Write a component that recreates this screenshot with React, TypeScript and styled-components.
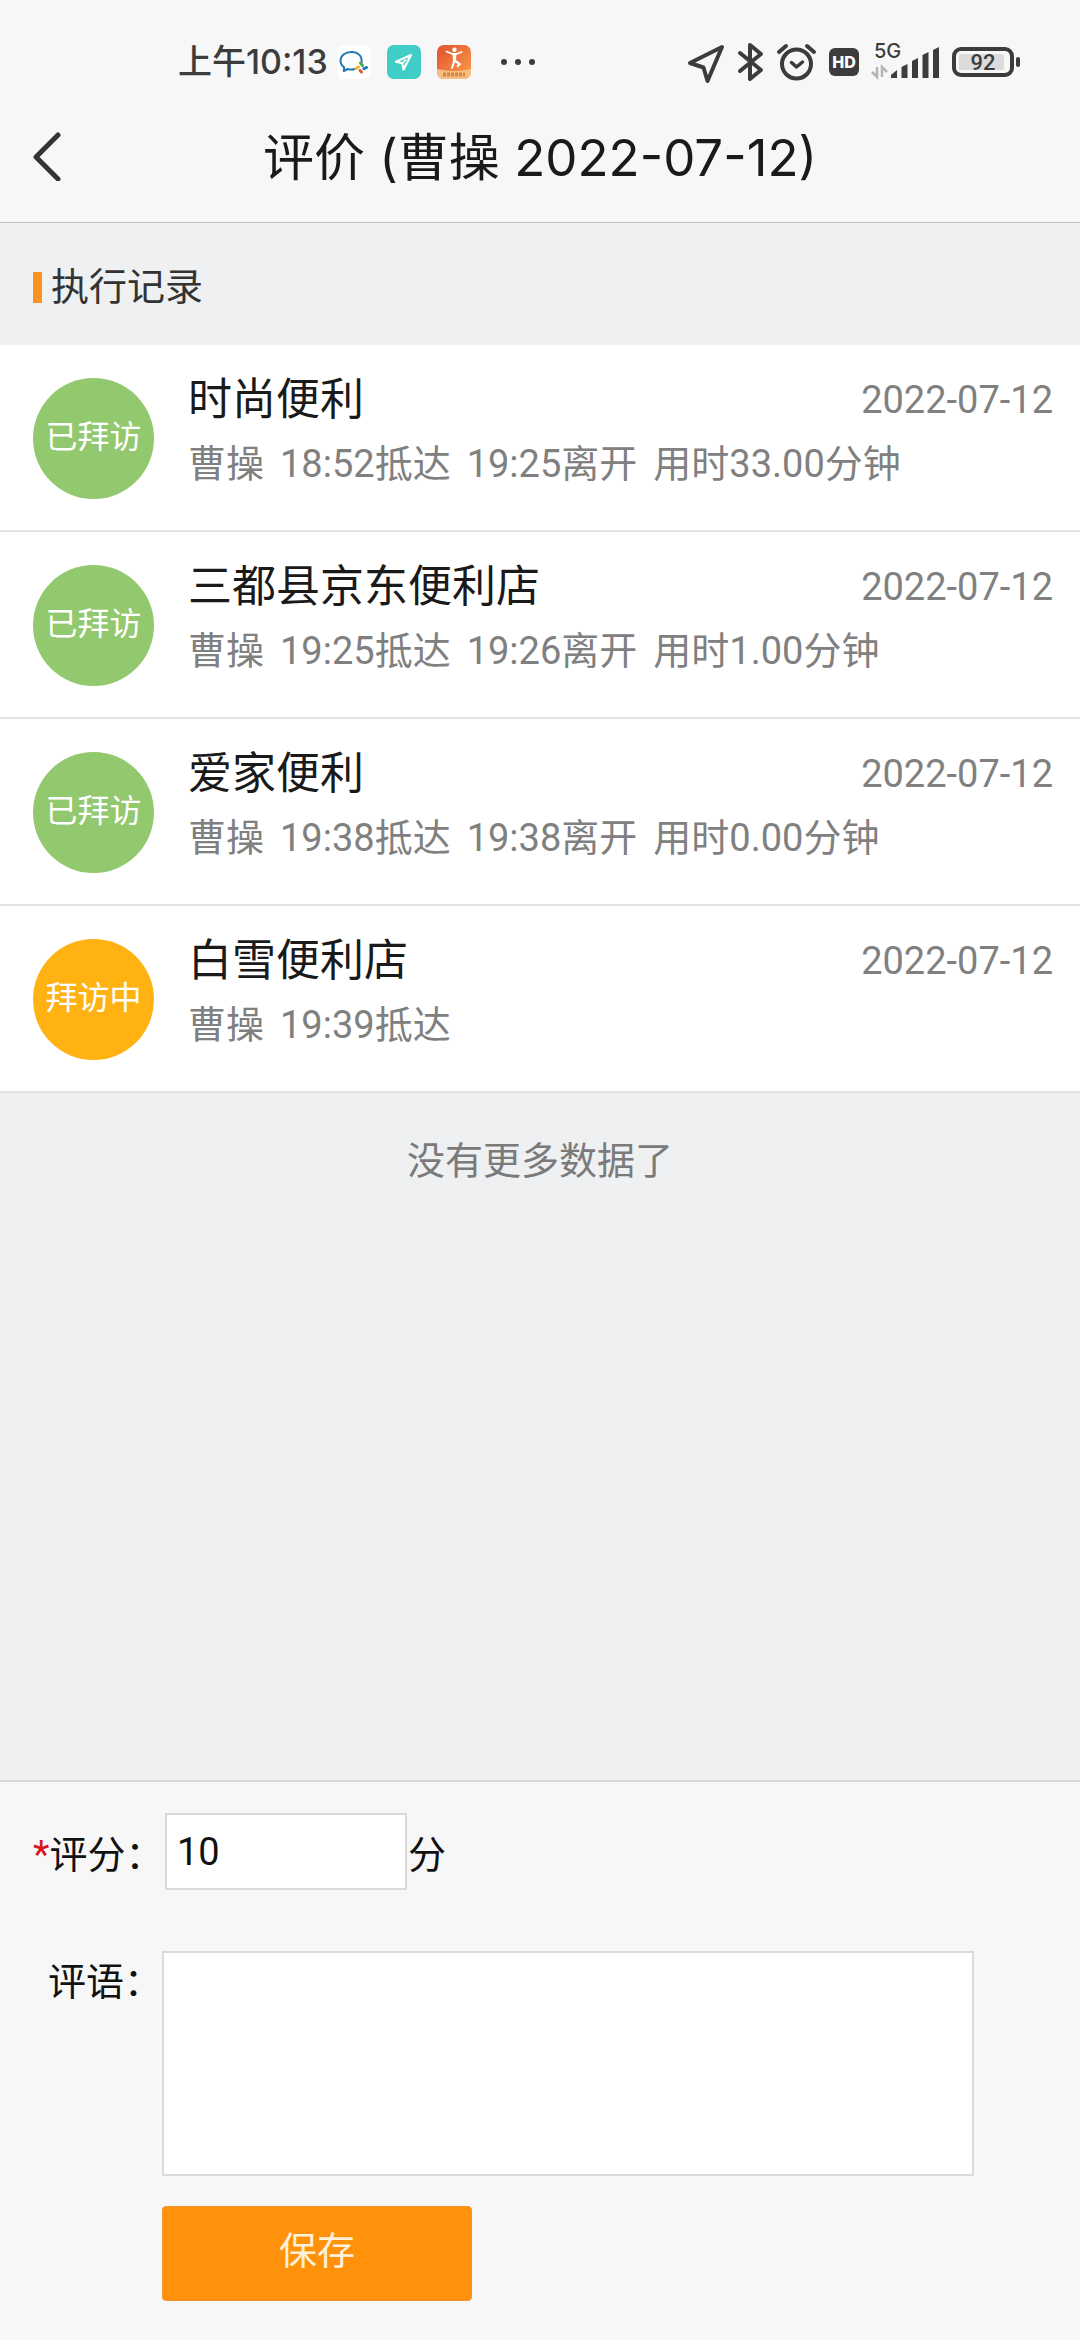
import React, { useState } from "react";
import styled, { createGlobalStyle } from "styled-components";

const sans = `Roboto, "Noto Sans CJK SC", sans-serif`;
const display = `Inter, "Noto Sans CJK SC", sans-serif`;

const GlobalStyle = createGlobalStyle`
  *, *::before, *::after { box-sizing: border-box; }
  body {
    margin: 0;
    background: #eff0f2;
    font-family: ${sans};
  }
`;

const Page = styled.div`
  display: flex;
  flex-direction: column;
  min-height: 100vh;
`;

const TopArea = styled.header`
  background: #f7f7f7;
  border-bottom: 1px solid #bfbfc2;
`;

const StatusBar = styled.div`
  display: flex;
  align-items: center;
  justify-content: space-between;
  height: 90px;
  padding: 34px 60px 0 178px;
  color: #3c3c3c;

  svg {
    display: block;
    overflow: visible;
  }
`;

const StatusGroup = styled.div<{ $gap: number }>`
  display: flex;
  align-items: center;
  gap: ${(p) => p.$gap}px;
`;

const Clock = styled.time`
  width: 143px;
  font: 500 34px/40px ${display};
  white-space: nowrap;
`;

const NavBar = styled.div`
  display: grid;
  grid-template-columns: 96px 1fr 96px;
  align-items: center;
  height: 132px;
`;

const BackButton = styled.button`
  display: flex;
  align-items: center;
  height: 96px;
  padding: 0 0 0 32px;
  border: 0;
  background: none;
  color: #333;
`;

const Title = styled.h1`
  margin: 0;
  padding-top: 4px;
  font: 400 51px/64px ${display};
  color: #1a1a1a;
  text-align: center;
  white-space: nowrap;
`;

const Main = styled.main`
  flex: 1;
`;

const SectionTitle = styled.h2`
  display: flex;
  align-items: center;
  gap: 9px;
  height: 122px;
  margin: 0;
  padding: 6px 33px 0;
  font: 400 38px/56px ${sans};
  color: #333;

  &::before {
    content: "";
    width: 9px;
    height: 31px;
    background: #f7941d;
  }
`;

const RecordList = styled.ul`
  margin: 0;
  padding: 0;
  list-style: none;
`;

const Record = styled.li`
  display: flex;
  align-items: flex-start;
  gap: 34px;
  height: 187px;
  padding: 23px 27px 0 33px;
  border-bottom: 2px solid #e3e3e3;
  background: #fff;
`;

const StatusBadge = styled.span<{ $active?: boolean }>`
  display: flex;
  flex: none;
  align-items: center;
  justify-content: center;
  width: 121px;
  height: 121px;
  margin-top: 10px;
  padding-bottom: 4px;
  border-radius: 50%;
  background: ${(p) => (p.$active ? "#ffb212" : "#92c86e")};
  color: #fff;
  font-size: 32px;
  line-height: 48px;
`;

const RecordBody = styled.div`
  flex: 1;
  min-width: 0;
`;

const RecordHead = styled.div`
  display: flex;
  justify-content: space-between;
  line-height: 64px;
`;

const StoreName = styled.span`
  font-size: 44px;
  color: #1a1a1a;
`;

const VisitDate = styled.time`
  font-size: 38px;
  color: #808080;
`;

const VisitInfo = styled.p`
  display: flex;
  gap: 16px;
  margin: 0;
  font-size: 38px;
  line-height: 64px;
  color: #808080;
`;

const EndNote = styled.p`
  margin: 0;
  padding: 40px 0;
  font-size: 38px;
  line-height: 56px;
  color: #7a7a7a;
  text-align: center;
`;

const RatingForm = styled.form`
  padding: 31px 106px 39px 33px;
  border-top: 2px solid #d6d6d8;
  background: #f7f7f7;
  font-size: 38px;
  line-height: 56px;
  color: #111;
`;

const Field = styled.div<{ $top?: boolean }>`
  display: flex;
  align-items: ${(p) => (p.$top ? "flex-start" : "center")};
`;

const ScoreLabel = styled.label`
  flex: none;
  width: 132px;
  padding-top: 6px;
  white-space: nowrap;
`;

const CommentLabel = styled.label`
  flex: none;
  width: 129px;
  padding: 3px 0 0 15px;
  white-space: nowrap;
`;

const Required = styled.span`
  color: #d9141e;
`;

const ScoreInput = styled.input`
  width: 242px;
  height: 77px;
  padding: 0 10px;
  border: 2px solid #dadada;
  border-radius: 0;
  outline: 0;
  background: #fff;
  font: 400 38px/56px ${sans};
  color: #111;
`;

const Unit = styled.span`
  padding: 6px 0 0 1px;
`;

const CommentInput = styled.textarea`
  display: block;
  flex: 1;
  min-width: 0;
  height: 225px;
  padding: 10px;
  border: 2px solid #dadada;
  border-radius: 0;
  outline: 0;
  resize: none;
  background: #fff;
  font: 400 38px/56px ${sans};
  color: #111;
`;

const CommentField = styled(Field)`
  margin: 61px 0 30px;
`;

const SaveButton = styled.button`
  display: block;
  width: 310px;
  height: 95px;
  margin-left: 129px;
  padding: 0 0 6px;
  border: 1px solid #f0953a;
  border-radius: 4px;
  background: #ff910b;
  font: 400 38px/56px ${sans};
  color: #fff0d8;
`;

const records = [
  { id: 1, badge: "已拜访", name: "时尚便利", date: "2022-07-12", info: ["曹操", "18:52抵达", "19:25离开", "用时33.00分钟"] },
  { id: 2, badge: "已拜访", name: "三都县京东便利店", date: "2022-07-12", info: ["曹操", "19:25抵达", "19:26离开", "用时1.00分钟"] },
  { id: 3, badge: "已拜访", name: "爱家便利", date: "2022-07-12", info: ["曹操", "19:38抵达", "19:38离开", "用时0.00分钟"] },
  { id: 4, badge: "拜访中", name: "白雪便利店", date: "2022-07-12", info: ["曹操", "19:39抵达"], active: true },
];

const WeComIcon = () => (
  <svg width="34" height="34" viewBox="0 0 34 34" fill="none">
    <rect width="34" height="34" rx="7" fill="#fff" />
    <path
      d="M24.5 17.5c1-7-4-10.500-10-10.500C8 7 3.500 11 3.500 15.800c0 2.900 1.500 5 3.700 6.600L6.700 26l4-2c2.400.7 5 .7 7.300 0"
      stroke="#1f78b4"
      strokeWidth="2"
      strokeLinecap="round"
      strokeLinejoin="round"
    />
    <path d="M23.500 18l2 2.500" stroke="#47b04b" strokeWidth="3" strokeLinecap="round" />
    <path d="M29.500 22.500l-2.600 1.200" stroke="#1f78b4" strokeWidth="3" strokeLinecap="round" />
    <path d="M24.500 27l-1.500-1.500" stroke="#e8532f" strokeWidth="3" strokeLinecap="round" />
    <path d="M19 23.500l2.500-1.500" stroke="#f5b52b" strokeWidth="3" strokeLinecap="round" />
  </svg>
);

const CompassAppIcon = () => (
  <svg width="34" height="34" viewBox="0 0 34 34" fill="none">
    <rect width="34" height="34" rx="7" fill="#3fcdc5" />
    <path d="M24 10L9 16.800l6.300 1.400L16.500 24.500z" stroke="#fff" strokeWidth="2.200" strokeLinejoin="round" />
    <path d="M15.300 18.200L19 14.500" stroke="#fff" strokeWidth="1.500" />
  </svg>
);

const SportAppIcon = () => (
  <svg width="34" height="34" viewBox="0 0 34 34" fill="none">
    <defs>
      <linearGradient id="sport" x1="0" y1="0" x2="1" y2="1">
        <stop offset="0" stopColor="#e2502f" />
        <stop offset="1" stopColor="#f9a04a" />
      </linearGradient>
      <clipPath id="tile">
        <rect width="34" height="34" rx="7" />
      </clipPath>
    </defs>
    <g clipPath="url(#tile)">
      <rect width="34" height="34" fill="url(#sport)" />
      <path d="M0 24q17 4 34 0v10H0z" fill="#f4bf85" />
      <path d="M6 29.500h22" stroke="#dd8440" strokeWidth="4" strokeDasharray="3 1" />
      <circle cx="17.500" cy="4.800" r="2.200" fill="#fff" />
      <path
        d="M9.500 6.500l6 2.500h4l5-2"
        stroke="#fff"
        strokeWidth="1.800"
        strokeLinecap="round"
        strokeLinejoin="round"
      />
      <path d="M15.500 8.500h4l-.5 6.500 5.500 4-4 3.500-1-1.500 1.500-2-3-1.500-2.500 6.500-1.500-.5 2-7.500z" fill="#fff" />
    </g>
  </svg>
);

const MoreDots = () => (
  <svg width="48" height="34" viewBox="0 0 48 34" fill="currentColor">
    <circle cx="17" cy="17" r="3" />
    <circle cx="31" cy="17" r="3" />
    <circle cx="45" cy="17" r="3" />
  </svg>
);

const LocationIcon = () => (
  <svg width="38" height="40" viewBox="0 0 38 40" fill="none">
    <path
      d="M37 5L5 21l13.500 4.500L22.500 39z"
      stroke="currentColor"
      strokeWidth="4"
      strokeLinejoin="round"
    />
  </svg>
);

const BluetoothIcon = () => (
  <svg width="26" height="40" viewBox="0 0 26 40" fill="none">
    <path
      d="M4 11l21 17-11 9V3l11 9L4 29"
      stroke="currentColor"
      strokeWidth="4"
      strokeLinecap="round"
      strokeLinejoin="round"
    />
  </svg>
);

const AlarmIcon = () => (
  <svg width="40" height="40" viewBox="0 0 40 40" fill="none" stroke="currentColor" strokeLinecap="round">
    <circle cx="21.500" cy="22" r="14.500" strokeWidth="4" />
    <path d="M4 10L11 4M39 10L32 4" strokeWidth="4" />
    <path d="M16.500 20.500l5 4.500 6-5" strokeWidth="3.500" strokeLinejoin="round" />
  </svg>
);

const HdIcon = () => (
  <svg width="30" height="30" viewBox="0 0 30 30">
    <rect x="1" y="1" width="30" height="28" rx="6" fill="currentColor" />
    <text x="16" y="21" textAnchor="middle" fontFamily="Inter, sans-serif" fontSize="16" fontWeight="800" fill="#fff">
      HD
    </text>
  </svg>
);

const SignalIcon = () => (
  <svg width="68" height="40" viewBox="0 0 68 40">
    <text x="3" y="16" fontFamily="Inter, sans-serif" fontSize="20" fontWeight="500" fill="currentColor">
      5G
    </text>
    <path d="M6 25v10l-5-5M11 35V25l5 5" fill="none" stroke="#b5b5b5" strokeWidth="2.500" />
    <g fill="currentColor">
      <path d="M20 36v-3l6-5v8z" />
      <path d="M30.500 36V25l6-3v14z" />
      <path d="M41 36V19l6-3v20z" />
      <path d="M51.500 36V13l6-3v26z" />
      <path d="M62 36V8l6-3v31z" />
    </g>
  </svg>
);

const BatteryIcon = () => (
  <svg width="68" height="30" viewBox="0 0 68 30">
    <rect x="2" y="2" width="58" height="26" rx="7" fill="none" stroke="currentColor" strokeWidth="4" />
    <rect x="7" y="7" width="45" height="16" rx="2" fill="#dcdcdc" />
    <rect x="64" y="10" width="4" height="10" rx="2" fill="currentColor" />
    <text x="31" y="23" textAnchor="middle" fontFamily="Roboto, sans-serif" fontSize="22" fontWeight="500" fill="currentColor">
      92
    </text>
  </svg>
);

const BackIcon = () => (
  <svg width="30" height="50" viewBox="0 0 30 50" fill="none" stroke="currentColor" strokeWidth="5">
    <path d="M26 4L4 26l22 22" strokeLinecap="round" strokeLinejoin="round" />
  </svg>
);

export default function App() {
  const [score, setScore] = useState("10");
  const [comment, setComment] = useState("");

  return (
    <Page>
      <GlobalStyle />
      <TopArea>
        <StatusBar>
          <StatusGroup $gap={16}>
            <Clock>上午10:13</Clock>
            <WeComIcon />
            <CompassAppIcon />
            <SportAppIcon />
            <MoreDots />
          </StatusGroup>
          <StatusGroup $gap={13}>
            <LocationIcon />
            <BluetoothIcon />
            <AlarmIcon />
            <HdIcon />
            <SignalIcon />
            <BatteryIcon />
          </StatusGroup>
        </StatusBar>
        <NavBar>
          <BackButton type="button" aria-label="返回">
            <BackIcon />
          </BackButton>
          <Title>评价 (曹操 2022-07-12)</Title>
        </NavBar>
      </TopArea>

      <Main>
        <SectionTitle>执行记录</SectionTitle>
        <RecordList>
          {records.map((r) => (
            <Record key={r.id}>
              <StatusBadge $active={r.active}>{r.badge}</StatusBadge>
              <RecordBody>
                <RecordHead>
                  <StoreName>{r.name}</StoreName>
                  <VisitDate>{r.date}</VisitDate>
                </RecordHead>
                <VisitInfo>
                  {r.info.map((part) => (
                    <span key={part}>{part}</span>
                  ))}
                </VisitInfo>
              </RecordBody>
            </Record>
          ))}
        </RecordList>
        <EndNote>没有更多数据了</EndNote>
      </Main>

      <RatingForm onSubmit={(e) => e.preventDefault()}>
        <Field>
          <ScoreLabel htmlFor="score">
            <Required>*</Required>评分：
          </ScoreLabel>
          <ScoreInput
            id="score"
            inputMode="numeric"
            value={score}
            onChange={(e) => setScore(e.target.value)}
          />
          <Unit>分</Unit>
        </Field>
        <CommentField $top>
          <CommentLabel htmlFor="comment">评语：</CommentLabel>
          <CommentInput id="comment" value={comment} onChange={(e) => setComment(e.target.value)} />
        </CommentField>
        <SaveButton type="submit">保存</SaveButton>
      </RatingForm>
    </Page>
  );
}
